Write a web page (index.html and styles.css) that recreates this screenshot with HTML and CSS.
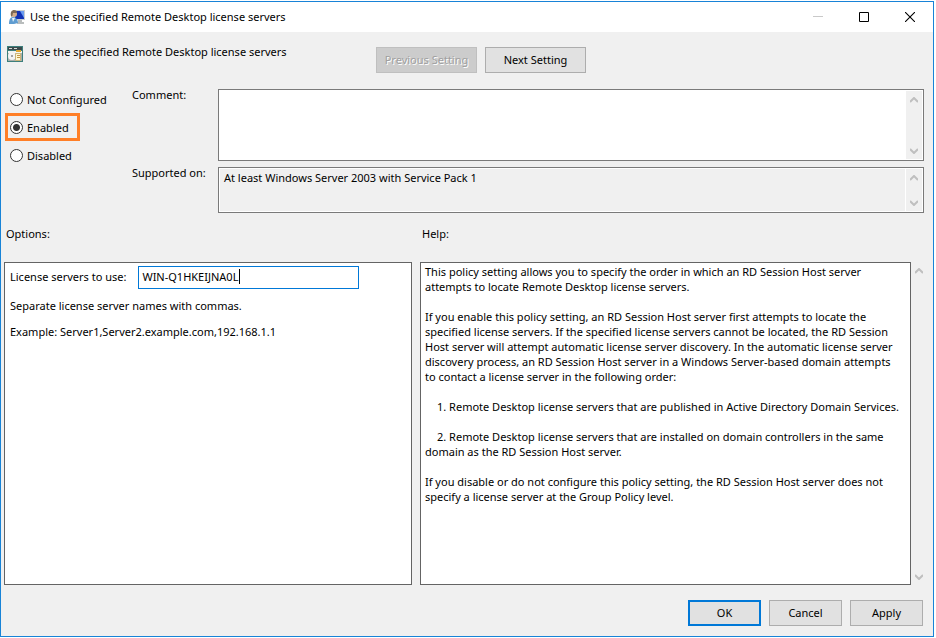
FILE: index.html
```html
<!DOCTYPE html>
<html lang="en">
<head>
   <meta charset="UTF-8">
   <meta name="viewport" content="width=device-width, initial-scale=1.0">
   <title>Use the specified Remote Desktop license servers</title>
   <link rel="stylesheet" href="styles.css">
</head>
<body>
   <div class="window">
      <header class="titlebar">
         <svg class="title-icon" width="16" height="16" viewBox="0 0 16 16">
            <path d="M5 1h11v10H5z" fill="#c9cdd0"/>
            <path d="M6 2h9v8H6z" fill="#1232b4"/>
            <path d="M11 2h4v7z" fill="#6c9cf0"/>
            <path d="M9 11h4v2h2v2H8v-2h1z" fill="#b9bdbd"/>
            <path d="M0 15c0-4 1-7 4-7s5 3 5 6l-4 1z" fill="#5f9cd0"/>
            <path d="M3 9l1 4 2-4z" fill="#e8f3fb"/>
            <circle cx="5" cy="5" r="3" fill="#d3ad88"/>
            <path d="M2 7c-1-4 1-6 3-6s3 1 3 3L4 4 3 8z" fill="#7d6a55"/>
         </svg>
         <h1>Use the specified Remote Desktop license servers</h1>
         <div class="window-controls">
            <button type="button" aria-label="Minimize" disabled>
               <svg width="10" height="10" viewBox="0 0 10 10"><path d="M0 4h10v1H0z" fill="#c9c9c9"/></svg>
            </button>
            <button type="button" aria-label="Maximize">
               <svg width="10" height="10" viewBox="0 0 10 10"><path d="M.5.5h9v9h-9z" fill="none" stroke="#000"/></svg>
            </button>
            <button type="button" aria-label="Close">
               <svg width="10" height="10" viewBox="0 0 10 10"><path d="M0 0l10 10M10 0L0 10" fill="none" stroke="#000" stroke-width="1.1"/></svg>
            </button>
         </div>
      </header>

      <form class="policy">
         <div class="policy-head">
            <div class="policy-name">
               <svg width="16" height="16" viewBox="0 0 16 16">
                  <path d="M0 0h16v16H0z" fill="#3d7f7c"/>
                  <path d="M1 1h14v3H1z" fill="#3c4a4c"/>
                  <path d="M2 2h3v1H2zM7 2h3v1H7z" fill="#d8dcd8"/>
                  <path d="M1 5h14v2H1z" fill="#f4f4f0"/>
                  <path d="M1 7h14v8H1z" fill="#a9adab"/>
                  <path d="M9 4h5v2H9z" fill="#e2a72e"/>
                  <circle cx="5" cy="10" r="4" fill="#f3f3f3"/>
                  <circle cx="5" cy="10" r="1" fill="#888"/>
                  <path d="M8.5 7.5h5v7h-5z" fill="#fff6d0" stroke="#c9b47a"/>
                  <path d="M10 9.5h3M10 11.5h3" stroke="#c29645"/>
               </svg>
               <span>Use the specified Remote Desktop license servers</span>
            </div>
            <button class="btn btn-wide" type="button" disabled>Previous Setting</button>
            <button class="btn btn-wide" type="button">Next Setting</button>
         </div>

         <div class="policy-state">
            <div class="states">
               <label class="state"><input type="radio" name="state">Not Configured</label>
               <label class="state marked"><input type="radio" name="state" checked>Enabled</label>
               <label class="state"><input type="radio" name="state">Disabled</label>
            </div>
            <div class="details">
               <label for="comment">Comment:</label>
               <div class="box comment">
                  <textarea id="comment"></textarea>
                  <div class="scrollbar">
                     <svg width="8" height="6" viewBox="0 0 8 6"><path d="M0 5l4-4 4 4" /></svg>
                     <svg width="8" height="6" viewBox="0 0 8 6"><path d="M0 1l4 4 4-4" /></svg>
                  </div>
               </div>
               <label for="supported">Supported on:</label>
               <div class="box supported">
                  <textarea id="supported" readonly>At least Windows Server 2003 with Service Pack 1</textarea>
                  <div class="scrollbar">
                     <svg width="8" height="6" viewBox="0 0 8 6"><path d="M0 5l4-4 4 4" /></svg>
                     <svg width="8" height="6" viewBox="0 0 8 6"><path d="M0 1l4 4 4-4" /></svg>
                  </div>
               </div>
            </div>
         </div>

         <div class="panels">
            <section class="options">
               <h2>Options:</h2>
               <div class="panel">
                  <div class="server-row">
                     <label for="servers">License servers to use:</label>
                     <div class="server-field">
                        <input id="servers" type="text" value="WIN-Q1HKEIJNA0L" spellcheck="false">
                        <span class="caret"></span>
                     </div>
                  </div>
                  <p>Separate license server names with commas.</p>
                  <p>Example: Server1,Server2.example.com,192.168.1.1</p>
               </div>
            </section>
            <section class="help">
               <h2>Help:</h2>
               <div class="help-body">
                  <div class="panel">
                     <p>This policy setting allows you to specify the order in which an RD Session Host server<br>attempts to locate Remote Desktop license servers.</p>
                     <p>If you enable this policy setting, an RD Session Host server first attempts to locate the<br>specified license servers. If the specified license servers cannot be located, the RD Session<br>Host server will attempt automatic license server discovery. In the automatic license server<br>discovery process, an RD Session Host server in a Windows Server-based domain attempts<br>to contact a license server in the following order:</p>
                     <p class="step">1. Remote Desktop license servers that are published in Active Directory Domain Services.</p>
                     <p class="step">2. Remote Desktop license servers that are installed on domain controllers in the same<br>domain as the RD Session Host server.</p>
                     <p>If you disable or do not configure this policy setting, the RD Session Host server does not<br>specify a license server at the Group Policy level.</p>
                  </div>
                  <div class="scrollbar">
                     <svg width="8" height="6" viewBox="0 0 8 6"><path d="M0 5l4-4 4 4" /></svg>
                     <svg width="8" height="6" viewBox="0 0 8 6"><path d="M0 1l4 4 4-4" /></svg>
                  </div>
               </div>
            </section>
         </div>

         <div class="actions">
            <button class="btn btn-default" type="button">OK</button>
            <button class="btn" type="button">Cancel</button>
            <button class="btn" type="button">Apply</button>
         </div>
      </form>
   </div>
</body>
</html>
```

FILE: styles.css
```css
*{
   margin: 0;
   padding: 0;
   box-sizing: border-box;
   outline: 0;
}
body{
   background: #fff;
   padding: 1px 2px 1px 0;
   font-family: "Noto Sans", "Open Sans", sans-serif;
   font-size: 11px;
   line-height: 15px;
   color: #000;
}
h1, h2{
   font-size: 11px;
   font-weight: normal;
}
button, input, textarea{
   font: inherit;
   color: inherit;
}
.window{
   min-height: calc(100vh - 2px);
   display: flex;
   flex-direction: column;
   border: 1px solid #1883d7;
   background: #f0f0f0;
}
/* title bar */
.titlebar{
   display: flex;
   align-items: center;
   height: 30px;
   padding-left: 8px;
   background: #fff;
}
.titlebar h1{
   flex: 1;
   margin-left: 5px;
   padding-bottom: 2px;
}
.window-controls{
   display: flex;
}
.window-controls button{
   display: grid;
   place-items: center;
   width: 46px;
   height: 28px;
   border: 0;
   background: none;
}
/* form */
.policy{
   flex: 1;
   display: flex;
   flex-direction: column;
   padding: 15px 6px 10px 3px;
}
.policy-head{
   display: flex;
   gap: 8px;
}
.policy-name{
   display: flex;
   gap: 8px;
   width: 364px;
   padding-left: 3px;
}
.policy-name svg{
   margin-top: -1px;
}
.policy-name span{
   margin-top: -3px;
}
.btn{
   width: 73px;
   height: 26px;
   padding-bottom: 2px;
   border: 1px solid #adadad;
   background: #e1e1e1;
}
.btn-wide{
   width: 101px;
}
.btn-default{
   border: 2px solid #0078d7;
}
.btn:disabled{
   border-color: #bfbfbf;
   background: #ccc;
   color: #a0a0a0;
   text-shadow: 1px 1px 0 #fff;
}
.policy-state{
   display: flex;
   margin-top: 16px;
}
.states{
   width: 128px;
   flex-shrink: 0;
   margin-top: -4px;
   padding-left: 1px;
}
.state{
   display: flex;
   align-items: center;
   gap: 4px;
   width: max-content;
   height: 28px;
   padding: 0 8px 0 2px;
   border: 3px solid transparent;
}
.state.marked{
   border-color: #ff7f27;
}
.state input{
   appearance: none;
   width: 13px;
   height: 13px;
   border: 1px solid #333;
   border-radius: 50%;
   background: #fff;
}
.state input:checked{
   background: radial-gradient(circle, #333 3px, #fff 4px);
}
.details{
   flex: 1;
   display: grid;
   grid-template-columns: 86px 1fr;
   row-gap: 6px;
   margin-right: 3px;
}
.details label{
   margin-top: -2px;
}
.box{
   display: flex;
   padding: 1px;
   border: 1px solid #7a7a7a;
   background: #fff;
}
.comment{
   height: 72px;
}
.supported{
   height: 46px;
}
.box textarea{
   flex: 1;
   padding: 1px 4px;
   border: 0;
   resize: none;
   background: none;
}
.supported textarea{
   background: #f0f0f0;
   margin-right: 1px;
}
.scrollbar{
   display: flex;
   flex-direction: column;
   align-items: center;
   justify-content: space-between;
   width: 16px;
   padding: 6px 0 5px;
   background: #f0f0f0;
}
.scrollbar path{
   fill: none;
   stroke: #bfbfbf;
   stroke-width: 2;
}
/* options and help */
.panels{
   flex: 1;
   display: grid;
   grid-template-columns: minmax(0, 408fr) minmax(0, 507fr);
   gap: 8px;
   margin-top: 13px;
}
.options, .help{
   display: flex;
   flex-direction: column;
}
.panels h2{
   padding: 0 2px 21px;
}
.panel{
   flex: 1;
   border: 1px solid #646464;
   background: #fff;
}
.options .panel{
   padding: 3px 5px;
}
.options p{
   margin-bottom: 11px;
}
.server-row{
   display: flex;
   align-items: center;
   gap: 12px;
   margin-bottom: 9px;
}
.server-row label{
   padding-bottom: 2px;
}
.server-field{
   position: relative;
   display: flex;
}
.server-field input{
   width: 221px;
   height: 23px;
   padding: 0 3px 2px;
   border: 1px solid #0078d7;
   background: #fff;
}
.caret{
   position: absolute;
   top: 3px;
   left: 101px;
   width: 1px;
   height: 15px;
   background: #000;
}
.help-body{
   flex: 1;
   display: flex;
}
.help .panel{
   padding: 1px 4px;
   white-space: nowrap;
}
.help p{
   margin-bottom: 15px;
}
.step{
   text-indent: 12px;
}
.actions{
   display: flex;
   justify-content: flex-end;
   gap: 8px;
   margin: 15px 4px 0 0;
}
```
